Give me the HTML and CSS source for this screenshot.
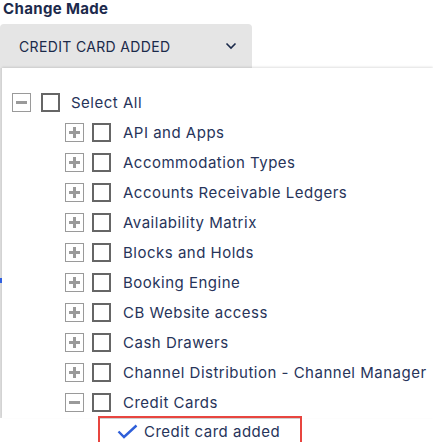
FILE: index.html
```html
<!DOCTYPE html>
<html>
<head>
<meta charset="utf-8">
<link rel="stylesheet" href="styles.css">
</head>
<body>
<div class="page">
  <div class="label">Change Made</div>
  <div class="select">
    <span class="select-text">CREDIT CARD ADDED</span>
    <svg class="chev" width="12" height="8" viewBox="0 0 12 8"><path d="M1.5 1.5 L6 6 L10.5 1.5" fill="none" stroke="#1b2a4a" stroke-width="1.6"/></svg>
  </div>
  <div class="panel">
    <div class="row root">
      <span class="exp minus"></span><span class="cb"></span><span class="txt">Select All</span>
    </div>
    <div class="children">
      <div class="row"><span class="exp plus"></span><span class="cb"></span><span class="txt">API and Apps</span></div>
      <div class="row"><span class="exp plus"></span><span class="cb"></span><span class="txt">Accommodation Types</span></div>
      <div class="row"><span class="exp plus"></span><span class="cb"></span><span class="txt">Accounts Receivable Ledgers</span></div>
      <div class="row"><span class="exp plus"></span><span class="cb"></span><span class="txt">Availability Matrix</span></div>
      <div class="row"><span class="exp plus"></span><span class="cb"></span><span class="txt">Blocks and Holds</span></div>
      <div class="row"><span class="exp plus"></span><span class="cb"></span><span class="txt">Booking Engine</span></div>
      <div class="row"><span class="exp plus"></span><span class="cb"></span><span class="txt">CB Website access</span></div>
      <div class="row"><span class="exp plus"></span><span class="cb"></span><span class="txt">Cash Drawers</span></div>
      <div class="row"><span class="exp plus"></span><span class="cb"></span><span class="txt">Channel Distribution - Channel Manager</span></div>
      <div class="row"><span class="exp minus"></span><span class="cb"></span><span class="txt">Credit Cards</span></div>
      <div class="leaf">
        <svg class="check" width="21" height="15" viewBox="0 0 21 15"><path d="M1.5 7.5 L7 13 L19.5 1.5" fill="none" stroke="#2f5fd9" stroke-width="2.4"/></svg>
        <span class="txt">Credit card added</span>
      </div>
    </div>
  </div>
  <span class="edge-mark"></span>
</div>
</body>
</html>
```
FILE: styles.css
```css
html, body {
  margin: 0;
  padding: 0;
  background: #ffffff;
}
body {
  font-family: "Inter", "Noto Sans", sans-serif;
  color: #27345a;
  overflow: hidden;
  width: 433px;
  height: 442px;
}
.page {
  position: relative;
  height: 442px;
}
.label {
  font-weight: 700;
  font-size: 15px;
  letter-spacing: 0.35px;
  color: #1c2a4c;
  padding: 0 0 0 3px;
  height: 24px;
  line-height: 18px;
}
.select {
  width: 252px;
  height: 44px;
  background: #e5e5e5;
  border-radius: 4px 4px 0 0;
  display: flex;
  align-items: center;
  justify-content: space-between;
  padding: 0 15px 0 19px;
  box-sizing: border-box;
}
.select-text {
  font-size: 14px;
  color: #1b2a4a;
  letter-spacing: 0.35px;
}
.chev {
  display: block;
}
.panel {
  margin-left: 2px;
  background: #ffffff;
  box-shadow: 0 -1px 2px rgba(0,0,0,0.12), -2px 0 0 #dcdcdc;
  padding: 24px 0 0 10px;
  height: 350px;
  box-sizing: border-box;
}
.row {
  display: flex;
  align-items: center;
  height: 30px;
}
.root {
  margin-top: -5px;
}
.children {
  padding-left: 53px;
}
.exp {
  width: 19px;
  height: 19px;
  box-sizing: border-box;
  border: 1px solid #9a9a9a;
  position: relative;
  flex: none;
}
.exp::before {
  content: "";
  position: absolute;
  left: 3px;
  top: 7px;
  width: 11px;
  height: 3px;
  background: #9a9a9a;
}
.plus::after {
  content: "";
  position: absolute;
  left: 7px;
  top: 3px;
  width: 3px;
  height: 11px;
  background: #9a9a9a;
}
.cb {
  width: 19px;
  height: 19px;
  box-sizing: border-box;
  border: 2px solid #666666;
  margin-left: 8px;
  flex: none;
}
.txt {
  font-size: 15px;
  letter-spacing: 0.5px;
  margin-left: 12px;
  white-space: nowrap;
  color: #27345a;
}
.root .cb {
  margin-left: 10px;
}
.root .txt {
  margin-left: 11px;
}
.leaf {
  margin-left: 33px;
  width: 204px;
  height: 30px;
  box-sizing: border-box;
  border: 2px solid #e8453f;
  box-shadow: inset 0 1px 0 #cfcfcf;
  display: flex;
  align-items: center;
  padding-left: 17px;
  margin-top: -1px;
}
.leaf .check {
  flex: none;
}
.leaf .txt {
  margin-left: 6px;
}
.edge-mark {
  position: absolute;
  left: 0;
  top: 278px;
  width: 2px;
  height: 5px;
  background: #3060e0;
}
```
